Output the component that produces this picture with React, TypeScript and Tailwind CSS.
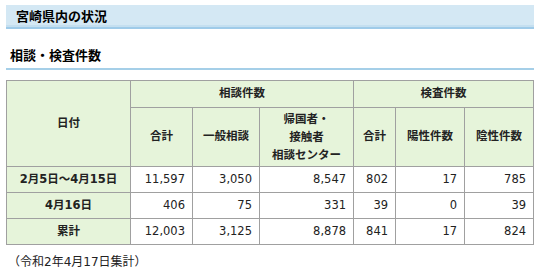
const rows = [
  { label: '2月5日～4月15日', v: ['11,597', '3,050', '8,547', '802', '17', '785'] },
  { label: '4月16日', v: ['406', '75', '331', '39', '0', '39'] },
  { label: '累計', v: ['12,003', '3,125', '8,878', '841', '17', '824'] },
];

const font = { fontFamily: '"DejaVu Sans", "Noto Sans CJK JP", sans-serif' };

export default function App() {
  return (
    <div className="w-[545px] h-[277px] bg-white pt-[5px] pl-[6px] text-[#222]" style={font}>
      <div className="w-[528px]">
        {/* Section title */}
        <h2 className="h-[24px] bg-[#d4e8f4] border-b-2 border-[#9fcbe9] shadow-[inset_0_-2px_0_#c4dff0] pl-[10px] text-[13px] font-bold leading-[23px] text-black">
          宮崎県内の状況
        </h2>

        {/* Sub title */}
        <h3 className="mt-[19px] h-[22px] border-b-2 border-[#a5cfe8] pl-[4px] text-[13px] font-bold leading-[16px] text-black">
          相談・検査件数
        </h3>

        <table className="mt-[10px] w-[527px] border-collapse text-[11.5px] table-fixed">
          <colgroup>
            <col className="w-[124px]" />
            <col className="w-[62px]" />
            <col className="w-[67px]" />
            <col className="w-[94px]" />
            <col className="w-[42px]" />
            <col className="w-[69px]" />
            <col className="w-[69px]" />
          </colgroup>
          <thead>
            <tr className="h-[27px]">
              <th rowSpan={2} className="border border-[#a0a0a0] bg-[#e6f4da] font-bold">日付</th>
              <th colSpan={3} className="border border-[#a0a0a0] bg-[#e6f4da] font-bold">相談件数</th>
              <th colSpan={3} className="border border-[#a0a0a0] bg-[#e6f4da] font-bold">検査件数</th>
            </tr>
            <tr className="h-[59px]">
              <th className="border border-[#a0a0a0] bg-[#e6f4da] font-bold">合計</th>
              <th className="border border-[#a0a0a0] bg-[#e6f4da] font-bold">一般相談</th>
              <th className="border border-[#a0a0a0] bg-[#e6f4da] font-bold leading-[18px]">
                帰国者・<br />接触者<br />相談センター
              </th>
              <th className="border border-[#a0a0a0] bg-[#e6f4da] font-bold">合計</th>
              <th className="border border-[#a0a0a0] bg-[#e6f4da] font-bold">陽性件数</th>
              <th className="border border-[#a0a0a0] bg-[#e6f4da] font-bold">陰性件数</th>
            </tr>
          </thead>
          <tbody>
            {rows.map((r) => (
              <tr key={r.label} className="h-[26px]">
                <td className="border border-[#a0a0a0] bg-[#e6f4da] text-center font-bold">{r.label}</td>
                {r.v.map((n, i) => (
                  <td key={i} className="border border-[#a0a0a0] bg-white text-right pr-[7px]">
                    {n}
                  </td>
                ))}
              </tr>
            ))}
          </tbody>
        </table>

        <p className="mt-[9px] pl-[2px] text-[12px] leading-[16px]">（令和2年4月17日集計）</p>
      </div>
    </div>
  );
}
